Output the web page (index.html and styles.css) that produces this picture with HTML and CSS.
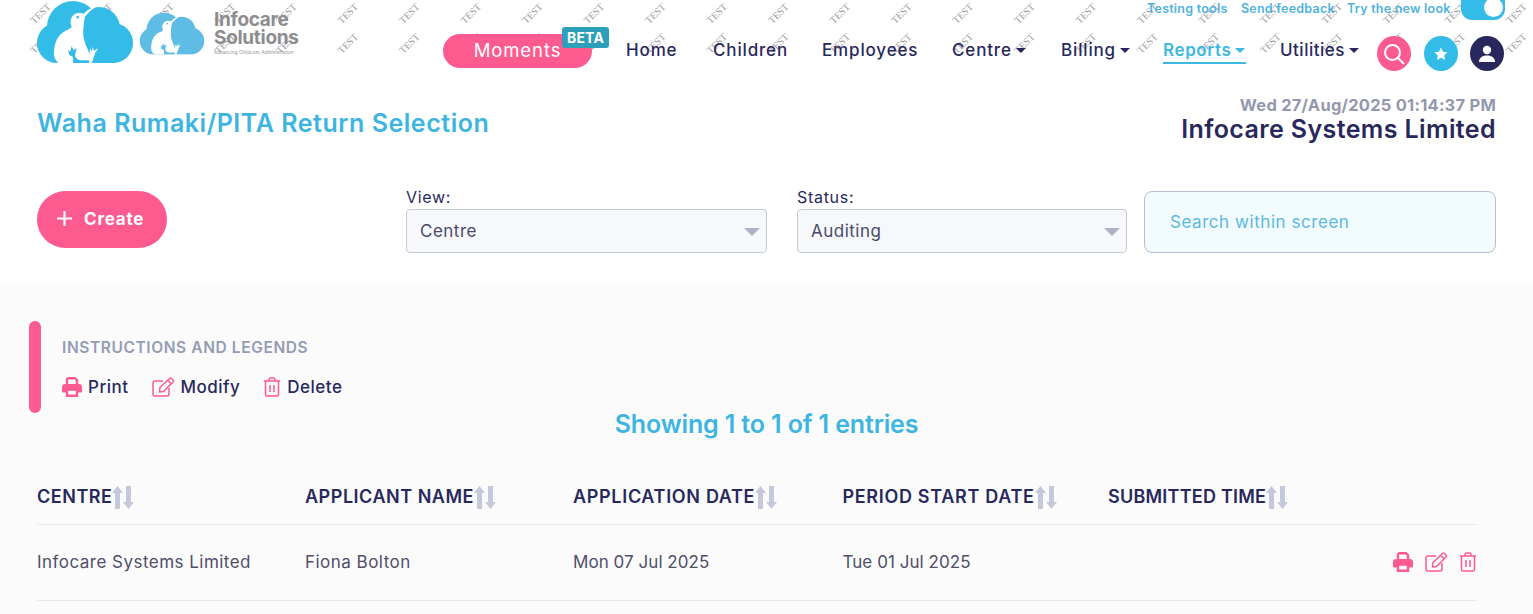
FILE: index.html
```html
<!DOCTYPE html>
<html lang="en">
<head>
<meta charset="utf-8">
<title>Waha Rumaki/PITA Return Selection</title>
<link rel="stylesheet" href="styles.css">
</head>
<body>
<svg class="defs" width="0" height="0" aria-hidden="true">
  <defs>
    <symbol id="cloud" viewBox="0 0 96 64">
      <circle cx="20" cy="43" r="20" fill="currentColor"/>
      <circle cx="36" cy="27" r="26" fill="currentColor"/>
      <circle cx="62" cy="28" r="21" fill="currentColor"/>
      <circle cx="76" cy="43" r="20" fill="currentColor"/>
      <rect x="20" y="35" width="56" height="28" fill="currentColor"/>
      <path d="M21.300 63C17.500 59 16.500 56 17 52C17.500 42 21 35 28 31C31 29.500 33 29 34.700 26.700C33.500 24 33.300 22 33.700 20C35 15.500 38 13 42 13C44 13 45.500 13.500 46.500 13.800C49.500 11 53 8.500 57.500 6.500L58.200 7.500C54 10 50.500 13.500 48 16.700C47.500 19 47 21 46.800 24C46.300 30 46 33 46.500 37C47.500 42 49 46 51 50L52.500 54.500L53 48.300L55 51.700L55.700 46.700L57 50.700L61.300 48.300L58 53.300C57.300 56 56.300 59 54.700 63Z" fill="#fff"/>
      <path d="M30.700 50L33 51.700L34.700 46L36.300 50L39.700 48.300L38 55C38.200 57 39 59 43 60.300L52 60.300L52 63L36 63C36.500 60 36 58.500 35.700 56.700L32.300 55Z" fill="currentColor"/>
      <circle cx="40.700" cy="17.300" r="1.300" fill="currentColor"/>
    </symbol>
    <symbol id="i-print" viewBox="0 0 20 20">
      <path d="M5 8V2.500A1.500 1.500 0 0 1 6.500 1.200H13l2 2V8" fill="none" stroke="currentColor" stroke-width="2.400"/>
      <path d="M3 7h14a3 3 0 0 1 3 3V14.500a1 1 0 0 1-1 1H16v-3H4v3H1a1 1 0 0 1-1-1V10a3 3 0 0 1 3-3Z" fill="currentColor"/>
      <path d="M5 12.500h10v6.300H5Z" fill="none" stroke="currentColor" stroke-width="2.400"/>
    </symbol>
    <symbol id="i-edit" viewBox="0 0 23 20">
      <path d="M17 11v6a2 2 0 0 1-2 2H3a2 2 0 0 1-2-2V6a2 2 0 0 1 2-2h8" fill="none" stroke="currentColor" stroke-width="1.500"/>
      <path d="M8 10.500 17.500 1.500a1.500 1.500 0 0 1 2 0l1.500 1.500a1.500 1.500 0 0 1 0 2L11.500 14.500 7.500 15Z" fill="none" stroke="currentColor" stroke-width="1.500"/>
      <path d="M16 3.500 19.500 7" stroke="currentColor" stroke-width="1.500"/>
    </symbol>
    <symbol id="i-trash" viewBox="0 0 18 20">
      <path d="M1 4h16M6 4V2.500A1.500 1.500 0 0 1 7.500 1h3A1.500 1.500 0 0 1 12 2.500V4" fill="none" stroke="currentColor" stroke-width="1.500"/>
      <path d="M2.500 4v13.500A1.500 1.500 0 0 0 4 19h10a1.500 1.500 0 0 0 1.500-1.500V4M7 8v7M11 8v7" fill="none" stroke="currentColor" stroke-width="1.500"/>
    </symbol>
    <symbol id="i-sort" viewBox="0 0 22 23">
      <path d="M5.500 0 11 7H8V23H3V7H0ZM16.500 23 22 16H19V0H14V16H11Z" fill="currentColor"/>
    </symbol>
  </defs>
</svg>

<header class="top">
  <svg class="watermark" aria-hidden="true">
    <defs>
      <pattern id="wm" x="9" y="-32" width="61.500" height="30" patternUnits="userSpaceOnUse">
        <text class="wm-text" x="31" y="19" text-anchor="middle" transform="rotate(-45 31 15)">TEST</text>
      </pattern>
    </defs>
    <rect width="100%" height="100%" fill="url(#wm)"/>
  </svg>

  <div class="logo">
    <svg class="cloud-a"><use href="#cloud"/></svg>
    <svg class="cloud-b"><use href="#cloud"/></svg>
    <div class="logo-text">
      <div class="logo-name">Infocare</div>
      <div class="logo-name">Solutions</div>
      <div class="logo-tag">Advancing Childcare Administration</div>
    </div>
  </div>

  <div class="top-right">
    <div class="tools">
      <a>Testing tools</a>
      <a>Send feedback</a>
      <a>Try the new look</a>
      <span class="toggle"><span class="knob"></span></span>
    </div>
    <nav class="nav">
      <a class="moments">Moments<span class="beta">BETA</span></a>
      <a class="n-home">Home</a>
      <a class="n-children">Children</a>
      <a class="n-employees">Employees</a>
      <a class="n-centre">Centre<i class="caret"></i></a>
      <a class="n-billing">Billing<i class="caret"></i></a>
      <a class="n-reports active">Reports<i class="caret"></i></a>
      <a class="n-utilities">Utilities<i class="caret"></i></a>
      <span class="circle c-pink">
        <svg width="24" height="24" viewBox="0 0 24 24"><circle cx="10.500" cy="10.500" r="7.500" fill="none" stroke="#fff" stroke-width="2"/><path d="M16 16l6 6" stroke="#fff" stroke-width="2"/></svg>
      </span>
      <span class="circle c-blue">
        <svg width="14" height="14" viewBox="0 0 24 24"><path d="M12 1l3.400 7 7.600 1.100-5.500 5.400 1.300 7.600L12 18.500 5.200 22.100l1.300-7.600L1 9.100 8.600 8Z" fill="#fff"/></svg>
      </span>
      <span class="circle c-navy">
        <svg width="20" height="20" viewBox="0 0 20 20"><circle cx="10" cy="6" r="4.200" fill="#fff"/><path d="M2 18c0-4 3-6.500 8-6.500s8 2.500 8 6.500Z" fill="#fff"/></svg>
      </span>
    </nav>
  </div>
</header>

<section class="title-row">
  <h1>Waha Rumaki/PITA Return Selection</h1>
  <div class="org">
    <div class="date">Wed 27/Aug/2025 01:14:37 PM</div>
    <div class="org-name">Infocare Systems Limited</div>
  </div>
</section>

<section class="filters">
  <button class="create"><svg width="17" height="17" viewBox="0 0 17 17"><path d="M8.500 1v15M1 8.500h15" stroke="#fff" stroke-width="2.200"/></svg>Create</button>
  <label class="field f-view"><span class="field-label">View:</span><span class="select">Centre<i class="sel-arrow"></i></span></label>
  <label class="field f-status"><span class="field-label">Status:</span><span class="select">Auditing<i class="sel-arrow"></i></span></label>
  <div class="search">Search within screen</div>
</section>

<main class="content">
  <div class="legend">
    <div class="legend-title">INSTRUCTIONS AND LEGENDS</div>
    <div class="legend-items">
      <span class="legend-item"><svg class="ic-print"><use href="#i-print"/></svg>Print</span>
      <span class="legend-item"><svg class="ic-edit"><use href="#i-edit"/></svg>Modify</span>
      <span class="legend-item"><svg class="ic-trash"><use href="#i-trash"/></svg>Delete</span>
    </div>
  </div>
  <div class="showing">Showing 1 to 1 of 1 entries</div>
  <table class="grid">
    <colgroup><col class="c1"><col class="c2"><col class="c3"><col class="c4"><col class="c5"><col></colgroup>
    <thead>
      <tr>
        <th>CENTRE<svg class="sort"><use href="#i-sort"/></svg></th>
        <th>APPLICANT NAME<svg class="sort"><use href="#i-sort"/></svg></th>
        <th class="th-wide">APPLICATION DATE<svg class="sort"><use href="#i-sort"/></svg></th>
        <th class="th-wide">PERIOD START DATE<svg class="sort"><use href="#i-sort"/></svg></th>
        <th class="th-tight">SUBMITTED TIME<svg class="sort"><use href="#i-sort"/></svg></th>
        <th></th>
      </tr>
    </thead>
    <tbody>
      <tr>
        <td>Infocare Systems Limited</td>
        <td>Fiona Bolton</td>
        <td class="d">Mon 07 Jul 2025</td>
        <td class="d">Tue 01 Jul 2025</td>
        <td></td>
        <td class="actions">
          <svg class="a-print"><use href="#i-print"/></svg>
          <svg class="a-edit"><use href="#i-edit"/></svg>
          <svg class="a-trash"><use href="#i-trash"/></svg>
        </td>
      </tr>
    </tbody>
  </table>
</main>
</body>
</html>
```
FILE: styles.css
```css
* { box-sizing: border-box; }
html, body { margin: 0; padding: 0; }
body {
  width: 1533px;
  height: 614px;
  overflow: hidden;
  background: #fff;
  color: #28285c;
  font-family: Inter, "Noto Sans", sans-serif;
}
.defs { position: absolute; }

/* header */
.top {
  position: relative;
  height: 84px;
  display: flex;
  padding-left: 37px;
}
.watermark {
  position: absolute;
  left: 0;
  top: 0;
  width: 1533px;
  height: 52px;
}
.wm-text {
  font-family: "Liberation Serif", serif;
  font-size: 10px;
  fill: #8f8f96;
}
.logo {
  position: relative;
  display: flex;
  align-items: flex-start;
  width: 400px;
  color: #33bce8;
}
.cloud-a { width: 96px; height: 64px; flex: none; }
.cloud-b { width: 66px; height: 43px; margin: 12px 0 0 6px; flex: none; color: #5fbce4; }
.logo-text { margin: 11px 0 0 9px; color: #8d8d8f; }
.logo-name { font-size: 19px; height: 18px; line-height: 17px; font-weight: 700; letter-spacing: -0.300px; }
.logo-tag { font-size: 4.500px; line-height: 6px; margin-top: 3px; white-space: nowrap; letter-spacing: 0.100px; }

.top-right { position: relative; flex: 1; }
.tools {
  display: flex;
  align-items: flex-start;
  height: 22px;
  padding-left: 710px;
  font-size: 12.500px;
  line-height: 18px;
  font-weight: 600;
  letter-spacing: 0.230px;
  color: #4fb3de;
  white-space: nowrap;
}
.tools a:first-child { width: 94px; }
.tools a:nth-child(2) { width: 106px; }
.tools a:nth-child(3) { width: 114px; }
.toggle {
  display: block;
  width: 44px;
  height: 21px;
  margin-top: -1px;
  background: #33bce8;
  border-radius: 0 0 11px 11px;
  position: relative;
}
.knob {
  position: absolute;
  right: 2px;
  top: -1px;
  width: 19px;
  height: 19px;
  border-radius: 50%;
  background: #fff;
}

.nav {
  display: flex;
  align-items: flex-start;
  font-size: 17px;
  font-weight: 500;
  line-height: 24px;
  letter-spacing: 0.850px;
  white-space: nowrap;
  padding-left: 6px;
}
.nav > a { margin-top: 16px; }
.moments {
  position: relative;
  width: 149px;
  height: 34px;
  margin-top: 12px !important;
  margin-right: 34px;
  border-radius: 17px;
  background: #fd5a8f;
  color: #fff;
  font-size: 18.500px;
  font-weight: 400;
  letter-spacing: 0.900px;
  line-height: 32px;
  text-align: center;
}
.beta {
  position: absolute;
  left: 119px;
  top: -7px;
  width: 47px;
  height: 21px;
  border-radius: 3px;
  background: #2e9fbb;
  color: #fff;
  font-size: 14px;
  font-weight: 700;
  letter-spacing: 0.200px;
  line-height: 21px;
}
.n-home { width: 87px; }
.n-children { width: 109px; }
.n-employees { width: 130px; }
.n-centre { width: 109px; }
.n-billing { width: 102px; }
.n-utilities { width: 97px; letter-spacing: 0.500px; }
.active {
  height: 26px;
  margin-right: 34px;
  color: #3db8e0;
  font-weight: 600;
  letter-spacing: 0.600px;
  border-bottom: 2px solid #3db8e0;
  line-height: 24px;
}
.n-reports.active { width: 83px; }
.caret {
  display: inline-block;
  margin-left: 4px;
  vertical-align: 3px;
  border-left: 5px solid transparent;
  border-right: 5px solid transparent;
  border-top: 5px solid currentColor;
}
.circle {
  display: flex;
  align-items: center;
  justify-content: center;
  width: 34px;
  height: 35px;
  margin-top: 14px;
  margin-right: 14px;
  border-radius: 50%;
  flex: none;
}
.c-pink { background: #fd5a8f; margin-right: 13px; }
.c-blue { background: #33bce8; margin-right: 12px; }
.c-navy { background: #28285c; }

/* title */
.title-row {
  display: flex;
  justify-content: space-between;
  height: 107px;
  padding: 11px 37px 0;
}
h1 {
  margin: 12px 0 0;
  font-size: 25px;
  line-height: 32px;
  font-weight: 600;
  letter-spacing: 0.540px;
  color: #3db5e0;
}
.org { text-align: right; }
.date { font-size: 16.500px; line-height: 20px; font-weight: 700; letter-spacing: 0.230px; color: #9497ae; }
.org-name { font-size: 25px; line-height: 28px; font-weight: 600; letter-spacing: 0.390px; color: #28285c; }

/* filters */
.filters {
  display: flex;
  align-items: flex-start;
  height: 92px;
  padding-left: 37px;
}
.create {
  display: flex;
  align-items: center;
  gap: 11px;
  width: 130px;
  height: 57px;
  padding: 0 0 2px 19px;
  border: 0;
  border-radius: 29px;
  background: #fd5a8f;
  color: #fff;
  font: 700 17px Inter, sans-serif;
  letter-spacing: 0.800px;
}
.field { display: block; margin-top: 0; }
.f-view { width: 361px; margin-left: 239px; }
.f-status { width: 330px; margin-left: 30px; }
.field-label { display: block; height: 18px; font-size: 16px; line-height: 12px; letter-spacing: 0.700px; }
.select {
  position: relative;
  display: block;
  height: 44px;
  padding-left: 13px;
  border: 1px solid #c5cbd6;
  border-radius: 4px;
  background: #f6f8fb;
  font-size: 17px;
  letter-spacing: 0.500px;
  line-height: 42px;
  color: #4a4a6a;
}
.sel-arrow {
  position: absolute;
  right: 6px;
  top: 18px;
  border-left: 8px solid transparent;
  border-right: 8px solid transparent;
  border-top: 8px solid #b0b3c8;
}
.search {
  width: 352px;
  height: 62px;
  margin-left: 17px;
  padding-left: 25px;
  border: 1px solid #b5c0cc;
  border-radius: 8px;
  background: #f2fcff;
  color: #5cb8de;
  font-size: 17px;
  letter-spacing: 0.550px;
  line-height: 60px;
}

/* content */
.content {
  height: 331px;
  padding: 38px 0 0 37px;
  background: #fbfbfc;
}
.legend {
  position: relative;
  height: 92px;
  padding: 17px 0 0 25px;
}
.legend::before {
  content: "";
  position: absolute;
  left: -8px;
  top: 0;
  width: 12px;
  height: 92px;
  border-radius: 6px;
  background: #fd5a8f;
}
.legend-title {
  font-size: 15.500px;
  line-height: 20px;
  font-weight: 600;
  letter-spacing: 0.600px;
  color: #949bb5;
}
.legend-items { display: flex; margin-top: 17px; }
.legend-item {
  display: flex;
  align-items: center;
  gap: 6px;
  margin-right: 23px;
  font-size: 17px;
  line-height: 24px;
  font-weight: 500;
  letter-spacing: 0.500px;
}
.legend-item svg { color: #fd5a8f; }
.ic-print { width: 20px; height: 20px; }
.ic-edit { width: 23px; height: 20px; }
.ic-trash { width: 18px; height: 20px; }

.showing {
  width: 1459px;
  height: 76px;
  margin-top: -6px;
  text-align: center;
  font-size: 25px;
  line-height: 34px;
  font-weight: 600;
  letter-spacing: -0.130px;
  color: #3db5e0;
}
.grid {
  table-layout: fixed;
  width: 1440px;
  border-collapse: collapse;
}
.c1, .c2 { width: 268px; }
.c3 { width: 269.500px; }
.c4 { width: 265.500px; }
.c5 { width: 260px; }
th {
  height: 41px;
  padding: 0 0 13px;
  text-align: left;
  font-size: 18px;
  line-height: 28px;
  font-weight: 600;
  letter-spacing: 0.520px;
  white-space: nowrap;
  vertical-align: top;
  border-bottom: 1px solid #e7e8ec;
}
th.th-wide { letter-spacing: 0.680px; }
th.th-tight { letter-spacing: 0.230px; }
td {
  height: 76px;
  padding: 0 0 2px;
  font-size: 17px;
  letter-spacing: 0.470px;
  color: #4f4f68;
  border-bottom: 1px solid #e7e8ec;
}
td.d { letter-spacing: 0.050px; }
.sort { width: 22px; height: 23px; vertical-align: -6px; color: #c5c8da; }
.actions { text-align: right; white-space: nowrap; color: #fd5a8f; line-height: 0; }
.actions svg { vertical-align: middle; margin-left: 6px; }
.a-print { width: 20px; height: 20px; }
.a-edit { width: 23px; height: 20px; }
.a-trash { width: 18px; height: 20px; }
```
